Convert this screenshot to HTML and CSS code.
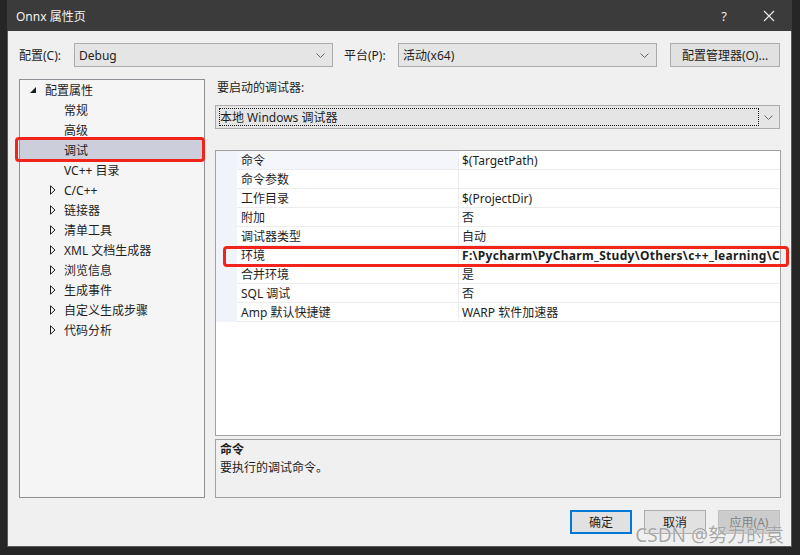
FILE: index.html
```html
<!DOCTYPE html>
<html lang="zh-CN">
<head>
<meta charset="utf-8">
<title>Onnx 属性页</title>
<link rel="stylesheet" href="styles.css">
</head>
<body>
<div class="screen">
  <div class="window">
    <div class="titlebar">
      <span class="title">Onnx 属性页</span>
      <span class="tb-help">?</span>
      <span class="tb-close"><svg width="12" height="12" viewBox="0 0 12 12"><path d="M1 1L11 11M11 1L1 11" stroke="#e8e8e8" stroke-width="1.2" fill="none"/></svg></span>
    </div>
    <div class="client">
      <div class="toprow">
        <span class="lbl lbl-config">配置(C):</span>
        <div class="combo combo-config"><span class="combo-text">Debug</span><svg class="chev" width="9" height="5" viewBox="0 0 9 5"><path d="M0.5 0.5L4.5 4.5L8.5 0.5" stroke="#666" fill="none"/></svg></div>
        <span class="lbl lbl-platform">平台(P):</span>
        <div class="combo combo-platform"><span class="combo-text">活动(x64)</span><svg class="chev" width="9" height="5" viewBox="0 0 9 5"><path d="M0.5 0.5L4.5 4.5L8.5 0.5" stroke="#666" fill="none"/></svg></div>
        <div class="btn btn-manager">配置管理器(O)...</div>
      </div>

      <div class="main">
        <div class="tree">
          <div class="trow lvl0"><span class="arr"><svg width="6" height="6" viewBox="0 0 6 6"><path d="M6 0L6 6L0 6Z" fill="#1e1e1e"/></svg></span><span>配置属性</span></div>
          <div class="trow lvl1"><span class="arr"></span><span>常规</span></div>
          <div class="trow lvl1"><span class="arr"></span><span>高级</span></div>
          <div class="trow lvl1 sel"><span class="arr"></span><span>调试</span></div>
          <div class="trow lvl1"><span class="arr"></span><span>VC++ 目录</span></div>
          <div class="trow lvl1"><span class="arr"><svg width="6" height="10" viewBox="0 0 6 10"><path d="M0.5 0.8L5 5L0.5 9.2Z" stroke="#1e1e1e" fill="none"/></svg></span><span>C/C++</span></div>
          <div class="trow lvl1"><span class="arr"><svg width="6" height="10" viewBox="0 0 6 10"><path d="M0.5 0.8L5 5L0.5 9.2Z" stroke="#1e1e1e" fill="none"/></svg></span><span>链接器</span></div>
          <div class="trow lvl1"><span class="arr"><svg width="6" height="10" viewBox="0 0 6 10"><path d="M0.5 0.8L5 5L0.5 9.2Z" stroke="#1e1e1e" fill="none"/></svg></span><span>清单工具</span></div>
          <div class="trow lvl1"><span class="arr"><svg width="6" height="10" viewBox="0 0 6 10"><path d="M0.5 0.8L5 5L0.5 9.2Z" stroke="#1e1e1e" fill="none"/></svg></span><span>XML 文档生成器</span></div>
          <div class="trow lvl1"><span class="arr"><svg width="6" height="10" viewBox="0 0 6 10"><path d="M0.5 0.8L5 5L0.5 9.2Z" stroke="#1e1e1e" fill="none"/></svg></span><span>浏览信息</span></div>
          <div class="trow lvl1"><span class="arr"><svg width="6" height="10" viewBox="0 0 6 10"><path d="M0.5 0.8L5 5L0.5 9.2Z" stroke="#1e1e1e" fill="none"/></svg></span><span>生成事件</span></div>
          <div class="trow lvl1"><span class="arr"><svg width="6" height="10" viewBox="0 0 6 10"><path d="M0.5 0.8L5 5L0.5 9.2Z" stroke="#1e1e1e" fill="none"/></svg></span><span>自定义生成步骤</span></div>
          <div class="trow lvl1"><span class="arr"><svg width="6" height="10" viewBox="0 0 6 10"><path d="M0.5 0.8L5 5L0.5 9.2Z" stroke="#1e1e1e" fill="none"/></svg></span><span>代码分析</span></div>
          <div class="redbox redbox-tree"></div>
        </div>

        <div class="right">
          <div class="dbg-label">要启动的调试器:</div>
          <div class="combo combo-debugger"><span class="focus-rect">本地 Windows 调试器</span><svg class="chev" width="9" height="5" viewBox="0 0 9 5"><path d="M0.5 0.5L4.5 4.5L8.5 0.5" stroke="#666" fill="none"/></svg></div>
          <div class="grid">
            <div class="grow"><span class="gut"></span><span class="gname first">命令</span><span class="gval">$(TargetPath)</span></div>
            <div class="grow"><span class="gut"></span><span class="gname">命令参数</span><span class="gval"></span></div>
            <div class="grow"><span class="gut"></span><span class="gname">工作目录</span><span class="gval">$(ProjectDir)</span></div>
            <div class="grow"><span class="gut"></span><span class="gname">附加</span><span class="gval">否</span></div>
            <div class="grow"><span class="gut"></span><span class="gname">调试器类型</span><span class="gval">自动</span></div>
            <div class="grow"><span class="gut"></span><span class="gname">环境</span><span class="gval bold">F:\Pycharm\PyCharm_Study\Others\c++_learning\C</span></div>
            <div class="grow"><span class="gut"></span><span class="gname">合并环境</span><span class="gval">是</span></div>
            <div class="grow"><span class="gut"></span><span class="gname">SQL 调试</span><span class="gval">否</span></div>
            <div class="grow"><span class="gut"></span><span class="gname">Amp 默认快捷键</span><span class="gval">WARP 软件加速器</span></div>
            <div class="gfill"><span class="gut"></span></div>
            <div class="redbox redbox-grid"></div>
          </div>
          <div class="desc">
            <div class="desc-title">命令</div>
            <div class="desc-text">要执行的调试命令。</div>
          </div>
        </div>
      </div>

      <div class="buttons">
        <div class="btn btn-ok">确定</div>
        <div class="btn">取消</div>
        <div class="btn btn-disabled">应用(A)</div>
      </div>
      <div class="watermark">CSDN @努力的袁</div>
    </div>
  </div>
</div>
</body>
</html>
```
FILE: styles.css
```css
* { box-sizing: border-box; }
html, body { margin: 0; padding: 0; }
body {
  background: #262626;
  font-family: "Noto Sans", "Noto Sans CJK SC", sans-serif;
  font-size: 12px;
  color: #1e1e1e;
}
.screen {
  width: 800px;
  height: 555px;
  padding-left: 7px;
  background: #262626;
  overflow: hidden;
}
.window {
  width: 785px;
  height: 547px;
  display: flex;
  flex-direction: column;
}
.titlebar {
  height: 31px;
  background: #3b3b3b;
  display: flex;
  align-items: center;
  padding-left: 9px;
  color: #f2f2f2;
  flex: none;
}
.title { font-size: 12px; flex: 1; }
.tb-help { font-size: 13px; width: 44px; text-align: center; color: #e8e8e8; }
.tb-close { width: 46px; display: flex; justify-content: center; }

.client {
  position: relative;
  flex: 1;
  background: #f0f0f0;
  border-left: 1px solid #5a5a5a;
  border-right: 1px solid #5a5a5a;
  border-bottom: 1px solid #5a5a5a;
  padding: 12px 10px 12px 11px;
  display: flex;
  flex-direction: column;
}

.toprow {
  height: 24px;
  display: flex;
  align-items: center;
}
.lbl { white-space: nowrap; }
.lbl-config { width: 55px; }
.lbl-platform { width: 54px; margin-left: 11px; }
.combo {
  height: 24px;
  background: #e5e5e5;
  border: 1px solid #acacac;
  display: flex;
  align-items: center;
  padding-left: 4px;
  padding-right: 7px;
}
.combo-text { flex: 1; }
.combo-config, .combo-platform { width: 259px; }
.chev { flex: none; }
.btn {
  height: 24px;
  background: #e1e1e1;
  border: 1px solid #adadad;
  display: flex;
  align-items: center;
  justify-content: center;
  white-space: nowrap;
}
.btn-manager { width: 110px; margin-left: auto; margin-right: 1px; }

.main {
  margin-top: 12px;
  height: 419px;
  display: grid;
  grid-template-columns: 186px 1fr;
  column-gap: 10px;
}
.tree {
  position: relative;
  background: #f5f5f5;
  border: 1px solid #8e9096;
  padding-top: 0px;
}
.trow {
  height: 20px;
  display: flex;
  align-items: center;
  white-space: nowrap;
}
.trow.lvl0 { padding-left: 10px; }
.trow.lvl0 .arr { width: 15px; }
.trow.lvl1 { padding-left: 30px; }
.trow.lvl1 .arr { width: 14px; }
.arr { display: flex; align-items: center; height: 20px; }
.trow.sel { background: #cccedb; }

.redbox {
  position: absolute;
  border: 3px solid #f2231b;
  border-radius: 4px;
}
.redbox-tree { left: -5px; top: 57px; width: 190px; height: 25px; }

.right {
  display: flex;
  flex-direction: column;
  min-width: 0;
}
.dbg-label {
  height: 16px;
  line-height: 17px;
  padding-left: 2px;
}
.combo-debugger {
  margin-top: 10px;
  width: 565px;
  padding-left: 3px;
  padding-right: 6px;
}
.focus-rect {
  flex: 1;
  height: 18px;
  line-height: 17px;
  border: 1px dotted #1a1a1a;
  margin-right: 5px;
  white-space: nowrap;
}
.grid {
  position: relative;
  margin-top: 21px;
  height: 286px;
  background: #ffffff;
  border: 1px solid #a0a0a0;
  display: flex;
  flex-direction: column;
}
.grow {
  height: 19px;
  display: grid;
  grid-template-columns: 21px 222px 1fr;
  flex: none;
}
.gut { background: #f0f3f9; }
.gname, .gval {
  border-bottom: 1px solid #ececec;
  padding-top: 1px;
  line-height: 17px;
  white-space: nowrap;
  overflow: hidden;
}
.gname { padding-left: 4px; border-right: 1px solid #ececec; }
.gname.first { background: #f4f6fb; }
.gval { padding-left: 3px; }
.gval.bold { font-weight: bold; letter-spacing: 0.3px; }
.gfill { flex: 1; display: grid; grid-template-columns: 21px 1fr; }
.gfill .gut { background: transparent; }
.redbox-grid { left: 7px; top: 95px; width: 566px; height: 21px; }

.desc {
  margin-top: 3px;
  flex: 1;
  background: #f0f0f0;
  border: 1px solid #a0a0a0;
  padding: 1px 4px;
}
.desc-title { font-weight: bold; height: 18px; line-height: 18px; }
.desc-text { height: 18px; line-height: 18px; }

.buttons {
  margin-top: 12px;
  display: flex;
  justify-content: flex-end;
  gap: 12px;
  margin-right: 1px;
}
.buttons .btn { width: 62px; }
.btn-ok { border: 2px solid #0078d7; }
.btn-disabled { background: #cccccc; border-color: #bfbfbf; color: #838383; }

.watermark {
  position: absolute;
  right: 7px;
  bottom: 0px;
  font-size: 19px;
  line-height: 22px;
  color: rgba(150, 150, 150, 0.85);
  text-shadow: 0 0 1px #ffffff;
  white-space: nowrap;
}
```
